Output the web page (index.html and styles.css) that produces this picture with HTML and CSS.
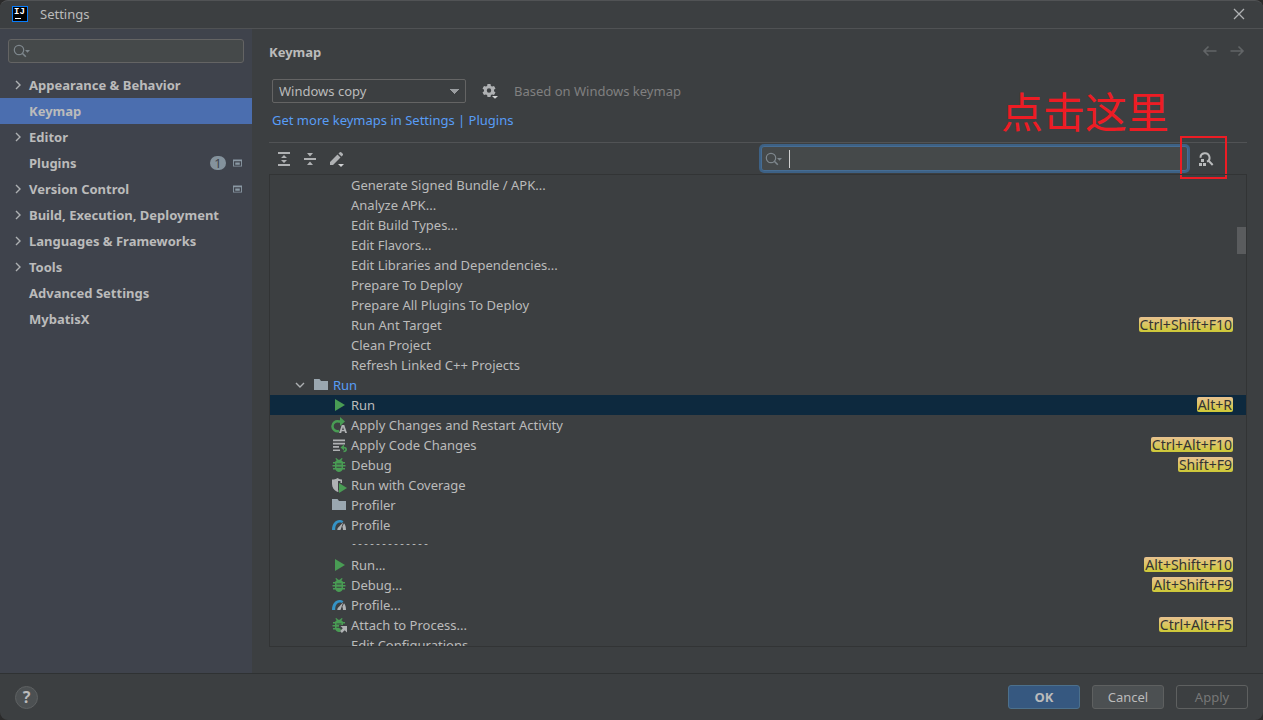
FILE: index.html
```html
<!DOCTYPE html>
<html lang="en">
<head>
<meta charset="utf-8">
<meta name="viewport" content="width=device-width, initial-scale=1">
<title>Settings</title>
<link rel="stylesheet" href="styles.css">
</head>
<body>
<svg class="sprite" aria-hidden="true">
  <symbol id="chevron" viewBox="0 0 16 16"><path d="M6 4l4 4-4 4" fill="none" stroke="#adb0b2" stroke-width="1.4"/></symbol>
  <symbol id="chevron-down" viewBox="0 0 16 16"><path d="M4 6l4 4 4-4" fill="none" stroke="#adb0b2" stroke-width="1.4"/></symbol>
  <symbol id="search" viewBox="0 0 18 16"><circle cx="6" cy="7" r="4.7" fill="none" stroke="#7d868c" stroke-width="1.2"/><path d="M9.3 10.3l3.500 3.500" stroke="#7d868c" stroke-width="1.6"/><path d="M12 7h5l-2.500 2.800z" fill="#7d868c"/></symbol>
  <symbol id="project" viewBox="0 0 10 8"><path d="M0 0h10v8H0zM1 2v5h8V2z" fill="#8a98a3" fill-rule="evenodd"/><path d="M2.500 3.500h5v2.500h-5z" fill="#8a98a3"/></symbol>
  <symbol id="folder" viewBox="0 0 16 16"><path d="M1 2h5.500L8 4h7v9H1z" fill="#9aa7b0"/></symbol>
  <symbol id="run" viewBox="0 0 16 16"><path d="M4 2l10 6-10 6z" fill="#499c54"/></symbol>
  <symbol id="bug" viewBox="0 0 16 16"><path d="M4.200 4.500L5.700 3.200 4.300 1.800l1-.9 2 1.900h1.400l2-1.900 1 .9-1.400 1.400 1.500 1.300V5H14v1.500h-2V8h2.500v1.500H12V11h2v1.500h-2.400C11 14 9.700 15 8 15s-3-1-3.600-2.500H2V11h2V9.500H1.500V8H4V6.500H2V5h2.200zM5.500 6.500v1h5v-1zM5.500 9.700v1h5v-1z" fill="#499c54" fill-rule="evenodd"/></symbol>
  <symbol id="attach" viewBox="0 0 16 16"><path d="M4.200 4.500L5.700 3.200 4.300 1.800l1-.9 2 1.900h1.400l2-1.900 1 .9-1.400 1.400 1.500 1.300V5H14v1.500h-2V8H8v3l2 1-1 3H8c-1.700 0-3-1-3.600-2.500H2V11h2V9.500H1.500V8H4V6.500H2V5h2.200zM5.500 6.500v1h5v-1zM5.500 9.700v1H8v-1z" fill="#499c54" fill-rule="evenodd"/><path d="M9.500 9H16v6.500l-2.300-2.300L10.900 16 9 14.100l2.800-2.800z" fill="#afb1b3"/></symbol>
  <symbol id="restart" viewBox="0 0 16 16"><path d="M8 14A5 5 0 1 1 8 4.500h2" fill="none" stroke="#499c54" stroke-width="2.500"/><path d="M9 0l5 4.500L9 9z" fill="#499c54"/><path d="M10.700 8h2.600l2.700 8h-1.900l-.5-1.700h-2.900l-.5 1.700H8.100zM12 9.900l-.9 3h1.800z" fill="#afb1b3" fill-rule="evenodd"/></symbol>
  <symbol id="code-changes" viewBox="0 0 16 16"><path d="M2 2.500h12v1.700H2zM2 5.800h12v1.700H2zM2 9.100h6v1.700H2zM2 12.400h7v1.700H2z" fill="#afb1b3"/><path d="M13 7.500v2.200c2 0 3 1.200 3 2.800s-1.200 2.800-3.500 2.800v-1.600c1.200 0 1.800-.4 1.800-1.200s-.4-1-1.300-1v2L9.500 10.500z" fill="#499c54"/></symbol>
  <symbol id="coverage" viewBox="0 0 16 16"><path d="M1 2.500c2 0 4-.5 5.500-1.500C8 2 9.500 2.500 11 2.500V6H9.500V4H7v9.500l1 .5-1.500 1C3 13.200 1 10.800 1 7z" fill="#afb1b3"/><path d="M8 6l8 5-8 5z" fill="#499c54"/></symbol>
  <symbol id="profile" viewBox="0 0 16 16"><path d="M1 13C1 6.800 4.400 3 8.500 3c1.600 0 2.800.4 4 1.300L10.700 6C7 4.500 4.200 7.500 4.200 13z" fill="#3592c4"/><path d="M12.200 5.200L9.500 13H6.300c0-1.300.6-2.200 1.500-3zM13 6.300c1.300 1.500 2 3.600 2 6.700h-3c0-1.500-.3-2.600-.7-3.300z" fill="#afb1b3"/></symbol>
  <symbol id="gear" viewBox="0 0 18 18"><path d="M6.500 2h3l.4 1.900 1.200.7 1.900-.6 1.500 2.500L13 7.800v1.400l1.500 1.300L13 13l-1.900-.6-1.200.7-.4 1.900h-3l-.4-1.900-1.200-.7L3 13l-1.500-2.500L3 9.200V7.800L1.500 6.500 3 4l1.900.6 1.200-.7zM8 6.300a2.200 2.200 0 1 0 0 4.400 2.200 2.200 0 0 0 0-4.400z" fill="#afb1b3" fill-rule="evenodd"/><path d="M10 13h7v1.500L14 18z" fill="#3c3f41"/><path d="M11 14h6l-3 2.700z" fill="#d0d2d3"/></symbol>
  <symbol id="expand" viewBox="0 0 16 16"><path d="M2 1h12v2H2zM2 13h12v2H2zM8 4l3 3H5zM8 12l3-3H5z" fill="#afb1b3"/></symbol>
  <symbol id="collapse" viewBox="0 0 16 16"><path d="M2 7h12v2H2zM5 2h6L8 5.500zM8 10.500l3 3.500H5z" fill="#afb1b3"/></symbol>
  <symbol id="edit" viewBox="0 0 18 16"><path d="M9.500 3.500l3 3L5 14H2v-3zM10.500 2.500l1.300-1.300q.7-.6 1.400 0l1.600 1.600q.6.700 0 1.400L13.500 5.500z" fill="#afb1b3"/><path d="M10 13h6l-3 3z" fill="#d0d2d3"/></symbol>
  <symbol id="find-shortcut" viewBox="0 0 16 16"><path d="M2.500 6.700a4.500 4.500 0 1 1 6.500 4M10.600 9.800l4.100 4.200" fill="none" stroke="#b9bbbc" stroke-width="2"/><path d="M3 8h3v3H3zM1 12h3v3H1zM5 12h3v3H5z" fill="#b9bbbc"/></symbol>
  <symbol id="arrow-left" viewBox="0 0 16 16"><path d="M14.500 7H2M6.500 2.500L2 7l4.500 4.500" fill="none" stroke="#626567" stroke-width="1.600"/></symbol>
  <symbol id="arrow-right" viewBox="0 0 16 16"><path d="M1.500 7H14M9.500 2.500L14 7l-4.500 4.500" fill="none" stroke="#626567" stroke-width="1.600"/></symbol>
  <symbol id="close" viewBox="0 0 16 16"><path d="M3 3l10 10M13 3L3 13" stroke="#afb1b3" stroke-width="1.300"/></symbol>
</svg>
<div class="dialog">
  <header class="titlebar">
    <span class="app-logo" aria-hidden="true">IJ</span>
    <span class="title">Settings</span>
    <button class="icon-button" aria-label="Close"><svg class="icon"><use href="#close"/></svg></button>
  </header>
  <div class="body">
    <nav class="sidebar" aria-label="Settings categories">
      <label class="field side-search"><svg class="search-icon"><use href="#search"/></svg><input type="text" aria-label="Search settings"></label>
      <ul class="categories">
        <li class="category"><svg class="icon"><use href="#chevron"/></svg><a href="#appearance">Appearance &amp; Behavior</a></li>
        <li class="category current"><a href="#keymap" aria-current="page">Keymap</a></li>
        <li class="category"><svg class="icon"><use href="#chevron"/></svg><a href="#editor">Editor</a></li>
        <li class="category"><a href="#plugins">Plugins</a><span class="count">1</span><svg class="project-icon"><use href="#project"/></svg></li>
        <li class="category"><svg class="icon"><use href="#chevron"/></svg><a href="#vcs">Version Control</a><svg class="project-icon"><use href="#project"/></svg></li>
        <li class="category"><svg class="icon"><use href="#chevron"/></svg><a href="#build">Build, Execution, Deployment</a></li>
        <li class="category"><svg class="icon"><use href="#chevron"/></svg><a href="#languages">Languages &amp; Frameworks</a></li>
        <li class="category"><svg class="icon"><use href="#chevron"/></svg><a href="#tools">Tools</a></li>
        <li class="category"><a href="#advanced">Advanced Settings</a></li>
        <li class="category"><a href="#mybatisx">MybatisX</a></li>
      </ul>
    </nav>
    <main class="content">
      <div class="page-head">
        <h1 class="page-title">Keymap</h1>
        <button class="icon-button" aria-label="Back" disabled><svg class="icon"><use href="#arrow-left"/></svg></button>
        <button class="icon-button" aria-label="Forward" disabled><svg class="icon"><use href="#arrow-right"/></svg></button>
      </div>
      <div class="scheme">
        <select class="scheme-select" aria-label="Keymap scheme"><option>Windows copy</option></select>
        <button class="icon-button" aria-label="Scheme actions"><svg class="icon-wide"><use href="#gear"/></svg></button>
        <span class="hint">Based on Windows keymap</span>
      </div>
      <p class="more"><a href="#plugins">Get more keymaps in Settings | Plugins</a></p>
      <div class="toolbar">
        <div class="tools">
          <button class="icon-button" aria-label="Expand all"><svg class="icon"><use href="#expand"/></svg></button>
          <button class="icon-button" aria-label="Collapse all"><svg class="icon"><use href="#collapse"/></svg></button>
          <button class="icon-button" aria-label="Edit shortcut"><svg class="icon-edit"><use href="#edit"/></svg></button>
        </div>
        <label class="field key-search"><svg class="search-icon"><use href="#search"/></svg><span class="caret"></span><input type="text" aria-label="Search actions"></label>
        <div class="find">
          <button class="icon-button" aria-label="Find actions by shortcut"><svg class="icon"><use href="#find-shortcut"/></svg></button>
          <span class="callout-text" lang="zh">点击这里</span>
          <span class="callout-box"></span>
        </div>
      </div>
      <div class="actions">
        <ul class="action-list">
          <li class="action"><span>Generate Signed Bundle / APK...</span></li>
          <li class="action"><span>Analyze APK...</span></li>
          <li class="action"><span>Edit Build Types...</span></li>
          <li class="action"><span>Edit Flavors...</span></li>
          <li class="action"><span>Edit Libraries and Dependencies...</span></li>
          <li class="action"><span>Prepare To Deploy</span></li>
          <li class="action"><span>Prepare All Plugins To Deploy</span></li>
          <li class="action"><span>Run Ant Target</span><kbd>Ctrl+Shift+F10</kbd></li>
          <li class="action"><span>Clean Project</span></li>
          <li class="action"><span>Refresh Linked C++ Projects</span></li>
          <li class="action group"><svg class="icon"><use href="#chevron-down"/></svg><svg class="icon"><use href="#folder"/></svg><span>Run</span></li>
          <li class="action selected"><svg class="icon"><use href="#run"/></svg><span>Run</span><kbd>Alt+R</kbd></li>
          <li class="action"><svg class="icon"><use href="#restart"/></svg><span>Apply Changes and Restart Activity</span></li>
          <li class="action"><svg class="icon"><use href="#code-changes"/></svg><span>Apply Code Changes</span><kbd>Ctrl+Alt+F10</kbd></li>
          <li class="action"><svg class="icon"><use href="#bug"/></svg><span>Debug</span><kbd>Shift+F9</kbd></li>
          <li class="action"><svg class="icon"><use href="#coverage"/></svg><span>Run with Coverage</span></li>
          <li class="action"><svg class="icon"><use href="#folder"/></svg><span>Profiler</span></li>
          <li class="action"><svg class="icon"><use href="#profile"/></svg><span>Profile</span></li>
          <li class="action"><span class="dashes">-------------</span></li>
          <li class="action"><svg class="icon"><use href="#run"/></svg><span>Run...</span><kbd>Alt+Shift+F10</kbd></li>
          <li class="action"><svg class="icon"><use href="#bug"/></svg><span>Debug...</span><kbd>Alt+Shift+F9</kbd></li>
          <li class="action"><svg class="icon"><use href="#profile"/></svg><span>Profile...</span></li>
          <li class="action"><svg class="icon"><use href="#attach"/></svg><span>Attach to Process...</span><kbd>Ctrl+Alt+F5</kbd></li>
          <li class="action"><span>Edit Configurations...</span></li>
        </ul>
        <span class="scroll-thumb"></span>
      </div>
    </main>
  </div>
  <footer class="footer">
    <button class="help" aria-label="Help">?</button>
    <button class="button primary">OK</button>
    <button class="button">Cancel</button>
    <button class="button" disabled>Apply</button>
  </footer>
</div>
</body>
</html>
```
FILE: styles.css
```css
* { box-sizing: border-box; }

body {
  margin: 0;
  background: #2b2b2b;
  color: #bbbbbb;
  font: 13px/20px "Noto Sans", "Open Sans", sans-serif;
}

button, input, select { font: inherit; color: inherit; }
ul { list-style: none; margin: 0; padding: 0; }
a { color: inherit; text-decoration: none; }

.sprite { position: absolute; width: 0; height: 0; }
.icon { width: 16px; height: 16px; flex: none; }
.icon-wide { width: 18px; height: 18px; flex: none; }
.icon-edit { width: 18px; height: 16px; flex: none; }
.search-icon { width: 18px; height: 16px; flex: none; }

.icon-button {
  display: flex;
  flex: none;
  padding: 0;
  border: 0;
  background: none;
}

.dialog {
  display: flex;
  flex-direction: column;
  height: 100vh;
  background: #3c3f41;
  border-radius: 8px;
  border-top: 1px solid #515355;
  overflow: hidden;
}

.titlebar {
  display: flex;
  align-items: center;
  height: 28px;
  padding: 0 16px 2px 12px;
  border-bottom: 1px solid #505254;
}
.title { flex: 1; margin-left: 12px; }
.app-logo {
  width: 16px;
  height: 16px;
  padding-left: 1px;
  border: 1px solid #087cfa;
  background: linear-gradient(#fff, #fff) 2px 11px / 6px 1px no-repeat #000;
  color: #fff;
  font: bold 9px/11px "Liberation Mono", monospace;
}

.body { display: flex; flex: 1; min-height: 0; }

.sidebar {
  flex: none;
  width: 252px;
  padding-top: 10px;
  background: #3f434c;
}
.field {
  display: flex;
  align-items: center;
  border: 1px solid #646464;
  border-radius: 3px;
  background: #45494a;
}
.field input {
  flex: 1;
  min-width: 0;
  padding: 0;
  border: 0;
  background: none;
  outline: 0;
}
.side-search { height: 24px; margin: 0 8px 9px; padding: 0 4px; }

.category {
  display: flex;
  align-items: center;
  height: 26px;
  padding: 0 10px 0 29px;
  font-weight: bold;
}
.category > .icon { margin-left: -19px; margin-right: 3px; }
.category a { flex: 1; white-space: nowrap; }
.current { background: #4b6eaf; }
.count {
  width: 16px;
  height: 14px;
  margin-right: 7px;
  border-radius: 7px;
  background: #84929c;
  color: #3f434c;
  font-weight: normal;
  line-height: 14px;
  text-align: center;
}
.project-icon { width: 9px; height: 8px; }

.content {
  display: flex;
  flex: 1;
  flex-direction: column;
  min-width: 0;
  padding: 0 16px 26px 17px;
}
.page-head { display: flex; align-items: center; gap: 11px; height: 46px; }
.page-title { flex: 1; margin: 0; font-size: 13px; }
.page-head .icon-button:last-child { margin-right: 2px; }

.scheme { display: flex; align-items: center; margin: 4px 3px 7px; }
.scheme-select {
  appearance: none;
  width: 194px;
  height: 24px;
  padding: 0 6px;
  border: 1px solid #646464;
  border-radius: 2px;
  background: conic-gradient(from -45deg at 50% 100%, #9a9da0 90deg, transparent 0) right 6px center / 10px 5px no-repeat;
  background-color: #3c3f41;
  line-height: 20px;
}
.scheme .icon-button { margin: 0 15px; }
.hint { color: #808080; }

.more { margin: 0 3px 12px; color: #589df6; }

.toolbar {
  display: flex;
  align-items: center;
  justify-content: space-between;
  height: 32px;
  border-top: 1px solid #515355;
}
.tools { display: flex; flex: 1; gap: 10px; padding-left: 7px; }
.key-search {
  flex: 0 1 427px;
  height: 25px;
  padding: 0 3px;
  border-color: #466d94;
  box-shadow: 0 0 0 2px #3d6185;
}
.caret { width: 1px; height: 18px; margin-left: 6px; background: #d0d0d0; }
.find { position: relative; padding: 0 33px 0 10px; }
.callout-text {
  position: absolute;
  right: 78px;
  bottom: 27px;
  color: #ed1c24;
  font: 42px/60px "Noto Sans CJK SC", sans-serif;
  white-space: nowrap;
}
.callout-box {
  position: absolute;
  top: -15px;
  right: 20px;
  width: 47px;
  height: 43px;
  border: 2px solid #ed1c24;
}

.actions {
  position: relative;
  flex: 1;
  min-height: 0;
  border: 1px solid #323435;
  overflow: hidden;
}
.action {
  display: flex;
  align-items: center;
  height: 20px;
  padding: 0 13px 0 81px;
  white-space: nowrap;
}
.action > .icon { margin-left: -20px; margin-right: 4px; }
.group { padding-left: 63px; color: #589df6; }
.group > .icon:first-child { margin-left: -41px; margin-right: 25px; }
.selected { background: #0d293e; }
.dashes { font: 10px/20px "Liberation Mono", monospace; }
kbd {
  margin: 0 0 1px auto;
  padding: 0 1px;
  border-radius: 2px;
  background: linear-gradient(#e8c290, #cdc936);
  color: #333333;
  font: 14px/15px "Noto Sans", "Open Sans", sans-serif;
}
.scroll-thumb {
  position: absolute;
  top: 11%;
  right: 0;
  width: 9px;
  height: 27px;
  background: #5a5c5e;
}

.footer {
  display: flex;
  align-items: center;
  gap: 12px;
  height: 47px;
  padding: 0 15px;
  border-top: 1px solid #2f3233;
}
.help {
  width: 23px;
  height: 23px;
  margin-right: auto;
  padding: 0;
  border: 1px solid #5e6162;
  border-radius: 50%;
  background: #4c5052;
  font-size: 16px;
  font-weight: bold;
  line-height: 20px;
}
.button {
  width: 72px;
  height: 24px;
  padding: 0;
  border: 1px solid #5e6060;
  border-radius: 3px;
  background: #4c5052;
  line-height: 20px;
}
.primary { border-color: #4c708c; background: #365880; font-weight: bold; }
.button:disabled { background: none; color: #777777; }
```
